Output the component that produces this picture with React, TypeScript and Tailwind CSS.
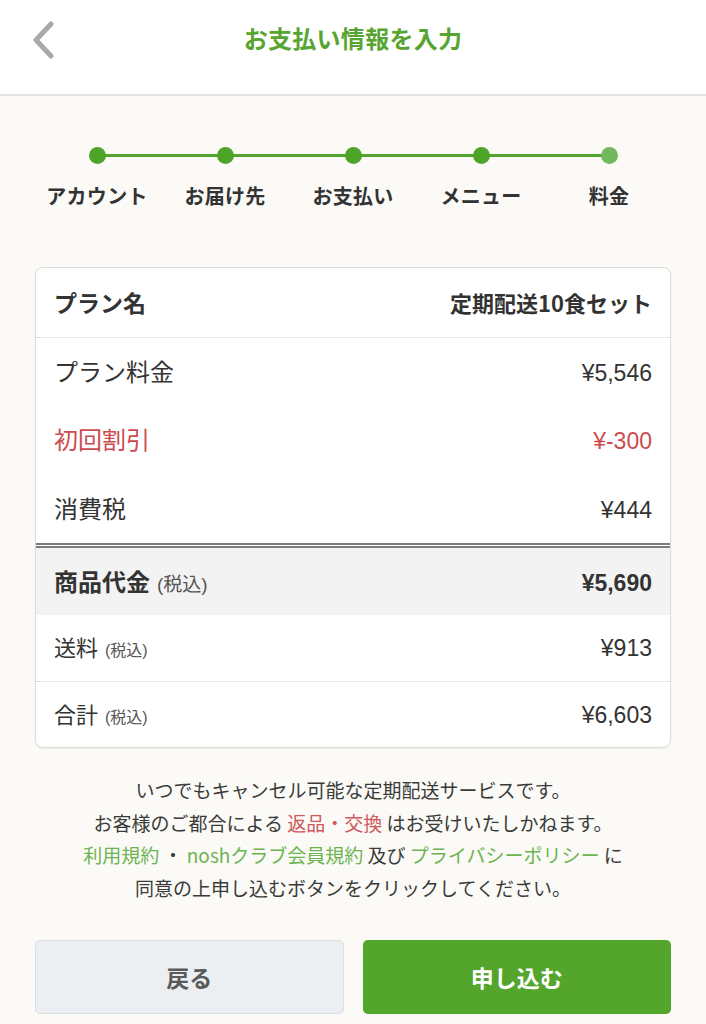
import React from "react";

const JP = { fontFamily: '"Noto Sans CJK JP", "Noto Sans", sans-serif' };
const NUM = { fontFamily: '"Liberation Sans", Arial, "Noto Sans CJK JP", sans-serif' };

const steps = ["アカウント", "お届け先", "お支払い", "メニュー", "料金"];

function Row({
  label,
  sub,
  value,
  className = "",
  labelClass = "",
  valueClass = "",
  subClass = "",
  jpValue = false,
}: {
  label: string;
  sub?: string;
  value: string;
  className?: string;
  labelClass?: string;
  valueClass?: string;
  subClass?: string;
  jpValue?: boolean;
}) {
  return (
    <div className={`flex items-center px-[18px] ${className}`}>
      <div className="flex w-full items-baseline justify-between">
        <div className="flex items-baseline">
          <span className={labelClass}>{label}</span>
          {sub && (
            <span className={`ml-[7px] ${subClass}`} style={NUM}>
              (<span style={JP}>税込</span>)
            </span>
          )}
        </div>
        <span className={valueClass} style={jpValue ? JP : NUM}>
          {value}
        </span>
      </div>
    </div>
  );
}

export default function App() {
  return (
    <div className="w-[706px] min-h-[1024px] bg-[#fbfaf6] text-[#333]" style={JP}>
      {/* Header */}
      <header className="h-[96px] bg-white border-b-2 border-[#e2e2e2]">
        <div className="relative flex h-[76px] items-center justify-center">
          <svg
            className="absolute left-[30px] top-[21px]"
            width="26"
            height="38"
            viewBox="0 0 26 38"
            fill="none"
          >
            <path d="M21 3 L6 19 L21 35" stroke="#a9aba6" strokeWidth="5" strokeLinecap="round" strokeLinejoin="round" />
          </svg>
          <h1 className="text-[24px] font-bold text-[#57a530] tracking-[0.3px]">お支払い情報を入力</h1>
        </div>
      </header>

      {/* Stepper */}
      <div className="px-[33px] pt-[51px]">
        <div className="relative grid grid-cols-5">
          <div className="absolute left-[64px] right-[64px] top-[7px] h-[3px] bg-[#55a42f]" />
          {steps.map((s, i) => (
            <div key={s} className="relative flex flex-col items-center">
              <div
                className={`h-[17px] w-[17px] rounded-full ${i === 4 ? "bg-[#73b85c]" : "bg-[#4ea329]"}`}
              />
              <div className="mt-[18px] text-[20px] font-bold leading-[28px] text-[#333] tracking-[0.3px]">{s}</div>
            </div>
          ))}
        </div>
      </div>

      {/* Card */}
      <div className="mx-[35px] mt-[57px] overflow-hidden rounded-[8px] border border-[#dcdcdc] bg-white shadow-[0_1px_2px_rgba(0,0,0,0.06)]">
        <Row
          label="プラン名"
          value="定期配送10食セット"
          jpValue
          className="h-[70px] border-b border-dotted border-[#cfcfcf]"
          labelClass="text-[23px] font-bold"
          valueClass="text-[22px] font-bold"
        />
        <Row label="プラン料金" value="¥5,546" className="h-[68px]" labelClass="text-[24px]" valueClass="text-[23px]" />
        <Row
          label="初回割引"
          value="¥-300"
          className="h-[68px] text-[#cc4b4f]"
          labelClass="text-[24px]"
          valueClass="text-[23px]"
        />
        <Row
          label="消費税"
          value="¥444"
          className="h-[74px] border-b-[5px] border-double border-[#7b7b7b]"
          labelClass="text-[24px]"
          valueClass="text-[23px]"
        />
        <Row
          label="商品代金"
          sub="(税込)"
          value="¥5,690"
          className="h-[67px] bg-[#f4f3f3]"
          labelClass="text-[24px] font-bold"
          subClass="text-[19px] text-[#555]"
          valueClass="text-[23px] font-bold"
        />
        <Row
          label="送料"
          sub="(税込)"
          value="¥913"
          className="h-[67px] border-b border-dotted border-[#cfcfcf]"
          labelClass="text-[22px]"
          subClass="text-[16px] text-[#555]"
          valueClass="text-[23px]"
        />
        <Row
          label="合計"
          sub="(税込)"
          value="¥6,603"
          className="h-[65px]"
          labelClass="text-[22px]"
          subClass="text-[16px] text-[#555]"
          valueClass="text-[23px]"
        />
      </div>

      {/* Notice */}
      <div className="mt-[26px] text-center text-[19px] leading-[32.5px] text-[#3a3a3a]">
        <p>いつでもキャンセル可能な定期配送サービスです。</p>
        <p>
          お客様のご都合による <span className="text-[#d0575b]">返品・交換</span> はお受けいたしかねます。
        </p>
        <p>
          <span className="text-[#6cb451]">利用規約</span> ・ <span className="text-[#6cb451]">noshクラブ会員規約</span> 及び{" "}
          <span className="text-[#6cb451]">プライバシーポリシー</span> に
        </p>
        <p>同意の上申し込むボタンをクリックしてください。</p>
      </div>

      {/* Buttons */}
      <div className="mx-[35px] mt-[36px] grid grid-cols-2 gap-[19px]">
        <button className="h-[74px] rounded-[5px] border border-[#dcdfe1] bg-[#ebeff1] text-[23px] font-bold text-[#5a5a5a]">
          戻る
        </button>
        <button className="h-[74px] rounded-[5px] bg-[#54a52c] text-[23px] font-bold text-white">申し込む</button>
      </div>
    </div>
  );
}
